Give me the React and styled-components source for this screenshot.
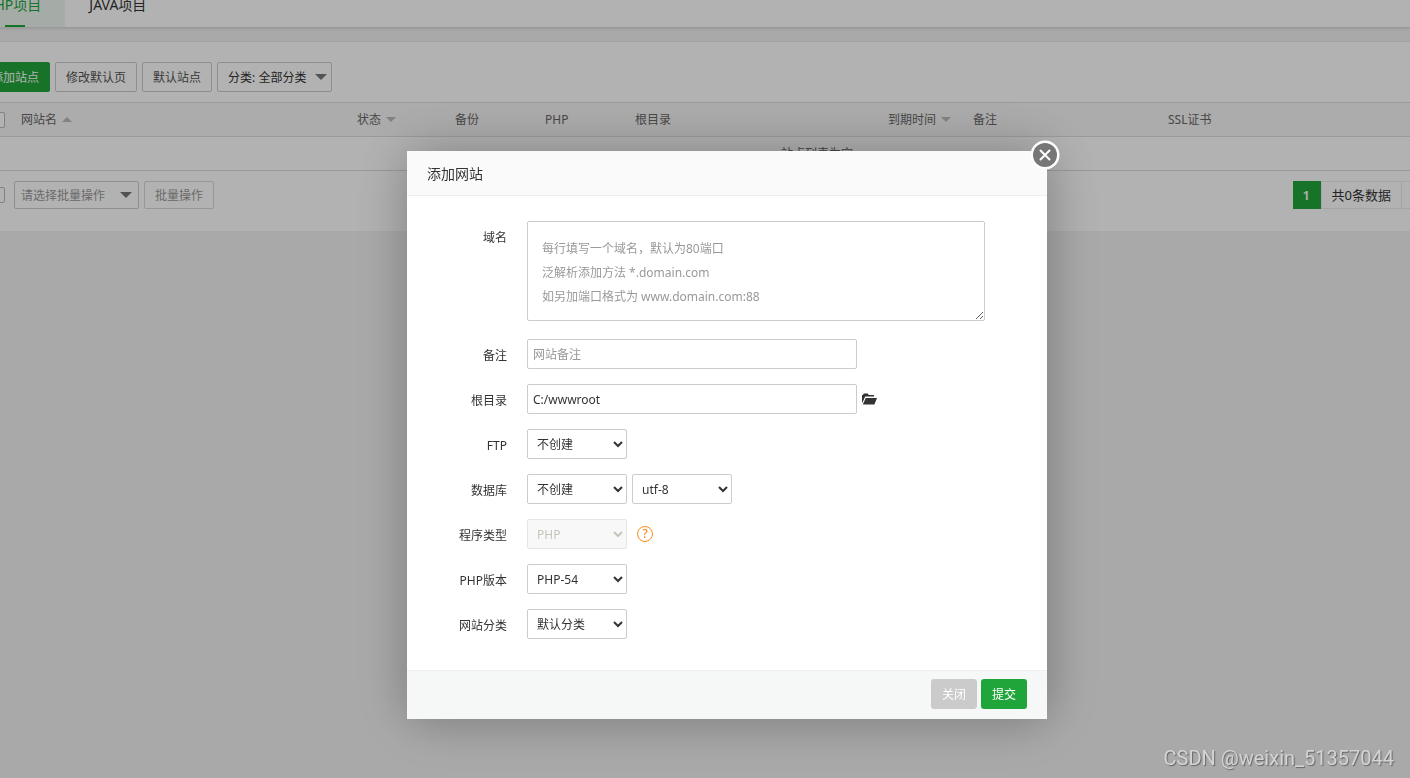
import { useState } from 'react'
import styled, { createGlobalStyle } from 'styled-components'

const GlobalStyle = createGlobalStyle`
* {
  box-sizing: border-box;
}
body {
  margin: 0;
  min-height: 100vh;
  background-color: #f3f3f3;
  color: #333;
  font-family: 'Noto Sans', 'Noto Sans CJK SC', sans-serif;
  font-size: 12px;
  line-height: 18px;
}
button, input, select, textarea {
  margin: 0;
  font-family: inherit;
  font-size: 12px;
  color: inherit;
}
`

const Page = styled.div`
overflow: hidden;
`

const Tabs = styled.nav`
display: flex;
height: 46px;
margin: -19px 0 14px -38px;
background-color: #fff;
box-shadow: 0 1px 4px rgba(0, 0, 0, .16);
`

const Tab = styled.button`
position: relative;
min-width: 100px;
padding: 0 24px;
border: none;
background-color: ${({ $active }) => $active ? '#edf7f1' : '#fff'};
color: ${({ $active }) => $active ? '#20a53a' : '#333'};
font-size: 14px;
cursor: pointer;
&::after {
  content: '';
  display: ${({ $active }) => $active ? 'block' : 'none'};
  position: absolute;
  left: 43px;
  bottom: 0;
  width: 20px;
  height: 2px;
  background-color: #20a53a;
}
`

const Card = styled.main`
margin: 0 -244px 0 -20px;
padding: 20px 0 22px;
border-top: 1px solid #e8e8e8;
background-color: #fff;
`

const Toolbar = styled.div`
display: flex;
gap: 5px;
margin-bottom: 10px;
`

const Button = styled.button`
height: ${({ $small }) => $small ? '28px' : '30px'};
padding: 0 10px;
border: 1px solid ${({ $primary }) => $primary ? '#20a53a' : '#ccc'};
border-radius: 2px;
background-color: ${({ $primary }) => $primary ? '#20a53a' : '#fff'};
color: ${({ $primary }) => $primary ? '#fff' : '#555'};
cursor: pointer;
&:disabled {
  border-color: #d9d9d9;
  color: #999;
}
`

const Dropdown = styled.label`
position: relative;
width: ${({ $width }) => $width};
select {
  appearance: none;
  width: 100%;
  height: ${({ $small }) => $small ? '28px' : '30px'};
  padding: 0 ${({ $small }) => $small ? '6px' : '10px'};
  border: 1px solid #ccc;
  border-radius: 2px;
  background-color: #fff;
  color: ${({ $small }) => $small ? '#999' : '#333'};
}
&::after {
  content: '';
  position: absolute;
  top: calc(50% - 3px);
  right: ${({ $small }) => $small ? '7px' : '5px'};
  border: 6px solid transparent;
  border-top-color: #777;
  border-bottom: none;
  pointer-events: none;
}
`

const Table = styled.table`
width: 100%;
table-layout: fixed;
border-collapse: collapse;
border-top: 1px solid #ddd;
th, td {
  height: 34px;
  padding: 0 8px;
  border-bottom: 1px solid #ddd;
  color: #666;
  font-weight: normal;
  text-align: left;
}
th {
  background-color: #f6f6f6;
}
th:first-child {
  padding: 0 0 0 9px;
}
td {
  text-align: center;
}
`

const Col = styled.col`
width: ${({ $width }) => $width};
`

const Sort = styled.span`
display: inline-block;
margin-left: 5px;
vertical-align: 2px;
border: 5px solid transparent;
border-${({ $up }) => $up ? 'bottom' : 'top'}-color: #bbb;
border-${({ $up }) => $up ? 'top' : 'bottom'}: none;
`

const Check = styled.input`
appearance: none;
display: block;
flex: none;
width: 16px;
height: 16px;
border: 1px solid #bbb;
border-radius: 2px;
background-color: #fff;
&:checked {
  background-color: #20a53a;
}
`

const Batch = styled.div`
display: flex;
align-items: center;
gap: 5px;
padding: 10px 0 0 9px;
${Dropdown} {
  margin-left: 4px;
}
`

const Pages = styled.div`
display: flex;
margin-left: auto;
font-size: 13px;
line-height: 26px;
span {
  padding: 0 10px;
  border: 1px solid #ececec;
  border-right: none;
}
.current {
  min-width: 28px;
  padding: 0 9px;
  border-color: #20a53a;
  background-color: #20a53a;
  color: #fff;
  font-weight: 600;
}
.rest {
  width: 253px;
}
`

const Overlay = styled.div`
position: fixed;
inset: 0;
display: flex;
justify-content: center;
align-items: flex-start;
padding: 151px 0 0 44px;
background-color: rgba(0, 0, 0, .3);
`

const Dialog = styled.form`
position: relative;
width: 640px;
background-color: #fff;
box-shadow: 1px 1px 50px rgba(0, 0, 0, .3);
h2 {
  margin: 0;
  padding: 2px 20px 0;
  border-bottom: 1px solid #eee;
  background-color: #fafafa;
  font-size: 14px;
  font-weight: normal;
  line-height: 42px;
}
`

const Close = styled.button`
position: absolute;
top: -11px;
right: -13px;
width: 30px;
height: 30px;
padding: 0;
border: none;
background: none;
cursor: pointer;
svg {
  display: block;
}
`

const Fields = styled.div`
display: flex;
flex-direction: column;
gap: 15px;
padding: 25px 0 31px;
`

const Field = styled.div`
display: flex;
align-items: flex-start;
gap: 5px;
padding-bottom: ${({ $tall }) => $tall ? '3px' : '0'};
& > label {
  width: 100px;
  height: 30px;
  margin-right: 15px;
  line-height: 34px;
  text-align: right;
}
`

const Input = styled.input`
width: 330px;
height: 30px;
padding: 0 5px;
border: 1px solid #ccc;
border-radius: 2px;
background-color: #fff;
&::placeholder {
  color: #999;
}
`

const TextArea = styled.textarea`
width: 458px;
height: 100px;
padding: 15px 14px 10px;
border: 1px solid #ccc;
border-radius: 2px;
line-height: 24px;
&::placeholder {
  color: #999;
}
`

const Select = styled.select`
width: 100px;
height: 30px;
padding: 0 5px;
border: 1px solid #ccc;
border-radius: 2px;
background-color: #fff;
&:disabled {
  border-color: #e6e6e6;
  background-color: #f8f8f8;
  color: #c6c5ba;
  opacity: 1;
}
`

const IconButton = styled.button`
display: flex;
align-items: center;
height: 30px;
padding: 0;
border: none;
background: none;
cursor: pointer;
`

const Help = styled.a`
display: flex;
width: 16px;
height: 16px;
margin: 7px 5px;
align-items: center;
justify-content: center;
border: 1px solid #ff8c1a;
border-radius: 50%;
color: #ff7e00;
text-decoration: none;
`

const Footer = styled.div`
display: flex;
justify-content: flex-end;
gap: 4px;
padding: 8px 20px 10px;
border-top: 1px solid #edf1f0;
background-color: #f6f8f8;
button {
  height: 30px;
  padding: 0 11px;
  border: none;
  border-radius: 3px;
  background-color: #cbcbcb;
  color: #fff;
  cursor: pointer;
}
button[type='submit'] {
  background-color: #20a53a;
}
`

const Watermark = styled.div`
position: fixed;
right: 16px;
bottom: 8px;
color: #d4d4d4;
font-family: Roboto, sans-serif;
font-size: 20px;
line-height: 24px;
text-shadow: 1px 1px 1px #666;
`

const COLUMNS = [
  { name: '网站名', width: '336px', sort: 'up' },
  { name: '状态', width: '98px', sort: 'down' },
  { name: '备份', width: '90px' },
  { name: 'PHP', width: '90px' },
  { name: '根目录', width: '253px' },
  { name: '到期时间', width: '85px', sort: 'down' },
  { name: '备注', width: '195px' },
  { name: 'SSL证书', width: 'auto' }
]

const DOMAIN_HINT = '每行填写一个域名，默认为80端口\n泛解析添加方法 *.domain.com\n如另加端口格式为 www.domain.com:88'

const AddSite = ({ onClose }) => {
  const [path, setPath] = useState('C:/wwwroot')

  const handleSubmit = e => {
    e.preventDefault()
    onClose()
  }

  return (
    <Overlay>
      <Dialog onSubmit={handleSubmit}>
        <h2>添加网站</h2>
        <Close type='button' aria-label='关闭' onClick={onClose}>
          <svg width='30' height='30' viewBox='0 0 30 30'>
            <circle cx='15' cy='15' r='14.5' fill='#fff' />
            <circle cx='15' cy='15' r='12' fill='#777' />
            <path d='M10.5 10.5l9 9M19.5 10.5l-9 9' stroke='#fff' strokeWidth='2' strokeLinecap='round' />
          </svg>
        </Close>
        <Fields>
          <Field $tall>
            <label htmlFor='domain'>域名</label>
            <TextArea id='domain' placeholder={DOMAIN_HINT} />
          </Field>
          <Field>
            <label htmlFor='note'>备注</label>
            <Input id='note' placeholder='网站备注' />
          </Field>
          <Field>
            <label htmlFor='path'>根目录</label>
            <Input id='path' value={path} onChange={e => setPath(e.target.value)} />
            <IconButton type='button' aria-label='选择目录'>
              <svg width='15' height='12' viewBox='0 0 15 12' fill='#333'>
                <path d='M0 9.5V2h1l.8-1.5h4L6.8 2H12v1.6H3.2L.5 9.5z' />
                <path d='M3.8 5H15l-2.6 6.6H.8z' />
              </svg>
            </IconButton>
          </Field>
          <Field>
            <label htmlFor='ftp'>FTP</label>
            <Select id='ftp'><option>不创建</option></Select>
          </Field>
          <Field>
            <label htmlFor='database'>数据库</label>
            <Select id='database'><option>不创建</option></Select>
            <Select aria-label='编码'><option>utf-8</option></Select>
          </Field>
          <Field>
            <label htmlFor='type'>程序类型</label>
            <Select id='type' disabled><option>PHP</option></Select>
            <Help href='#help'>?</Help>
          </Field>
          <Field>
            <label htmlFor='version'>PHP版本</label>
            <Select id='version'><option>PHP-54</option></Select>
          </Field>
          <Field>
            <label htmlFor='category'>网站分类</label>
            <Select id='category'><option>默认分类</option></Select>
          </Field>
        </Fields>
        <Footer>
          <button type='button' onClick={onClose}>关闭</button>
          <button type='submit'>提交</button>
        </Footer>
      </Dialog>
    </Overlay>
  )
}

export default function App() {
  const [open, setOpen] = useState(true)
  const [tab, setTab] = useState('PHP项目')

  return (
    <>
      <GlobalStyle />
      <Page>
        <Tabs>
          {
            ['PHP项目', 'JAVA项目'].map(name =>
              <Tab key={name} $active={tab === name} onClick={() => setTab(name)}>{name}</Tab>
            )
          }
        </Tabs>
        <Card>
          <Toolbar>
            <Button $primary onClick={() => setOpen(true)}>添加站点</Button>
            <Button>修改默认页</Button>
            <Button>默认站点</Button>
            <Dropdown $width='115px'>
              <select aria-label='分类'><option>分类: 全部分类</option></select>
            </Dropdown>
          </Toolbar>
          <Table>
            <colgroup>
              <Col $width='33px' />
              {COLUMNS.map(col => <Col key={col.name} $width={col.width} />)}
            </colgroup>
            <thead>
              <tr>
                <th><Check type='checkbox' aria-label='全选' /></th>
                {
                  COLUMNS.map(col =>
                    <th key={col.name}>
                      {col.name}
                      {col.sort && <Sort $up={col.sort === 'up'} />}
                    </th>
                  )
                }
              </tr>
            </thead>
            <tbody>
              <tr><td colSpan={9}>站点列表为空</td></tr>
            </tbody>
          </Table>
          <Batch>
            <Check type='checkbox' aria-label='全选' />
            <Dropdown $width='125px' $small>
              <select aria-label='批量操作'><option>请选择批量操作</option></select>
            </Dropdown>
            <Button $small disabled>批量操作</Button>
            <Pages>
              <span className='current'>1</span>
              <span>共0条数据</span>
              <span className='rest' />
            </Pages>
          </Batch>
        </Card>
      </Page>
      {open && <AddSite onClose={() => setOpen(false)} />}
      <Watermark>CSDN @weixin_51357044</Watermark>
    </>
  )
}
